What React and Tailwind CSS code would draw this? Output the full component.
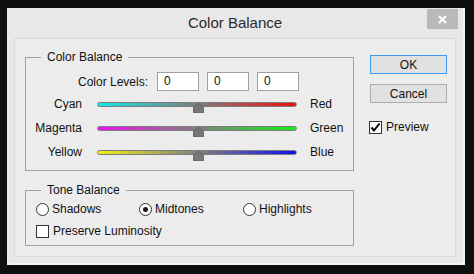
const font = { fontFamily: '"Liberation Sans", Arial, sans-serif' }

const Slider = ({ left, right, from, to }) => (
  <div className="flex items-center h-[24px]">
    <div className="w-[56px] text-right">{left}</div>
    <div className="relative ml-[15px] w-[200px] h-[5px] rounded-full border border-[#7c7c7c]"
      style={{ background: `linear-gradient(to right, ${from}, ${to})` }}>
      <svg className="absolute left-[95px] top-[0px]" width="11" height="10" viewBox="0 0 11 10">
        <path d="M5.5 0 L10.5 4 L10.5 9.5 L0.5 9.5 L0.5 4 Z" fill="#767676" stroke="#6a6a6a" />
      </svg>
    </div>
    <div className="ml-[13px]">{right}</div>
  </div>
)

const Radio = ({ label, checked, width }) => (
  <div className="flex items-center" style={{ width }}>
    <div className="w-[13px] h-[13px] rounded-full border border-[#333] bg-white flex items-center justify-center">
      {checked && <div className="w-[5px] h-[5px] rounded-full bg-[#1a1a1a]" />}
    </div>
    <span className="ml-[3px]">{label}</span>
  </div>
)

const Check = ({ label, checked }) => (
  <div className="flex items-center">
    <div className="w-[13px] h-[13px] border border-[#333] bg-white flex items-center justify-center">
      {checked && (
        <svg width="11" height="11" viewBox="0 0 11 11">
          <path d="M1.5 5.5 L4 8.5 L9.5 1.5" fill="none" stroke="#000" strokeWidth="2" />
        </svg>
      )}
    </div>
    <span className="ml-[4px]">{label}</span>
  </div>
)

export default function App() {
  return (
    <div className="w-[474px] h-[274px] bg-[#0e100f] pt-[8px] pl-[7px] text-[12px] text-[#111]" style={font}>
      <div className="w-[458px] h-[257px] bg-[#e8e8e8] border-r-2 border-b-2 border-[#f3f3f3] flex flex-col">
        <div className="grid grid-cols-[1fr_auto_1fr] h-[30px]">
          <div />
          <div className="text-[15px] text-[#2a2a2a] self-center">Color Balance</div>
          <div className="justify-self-end mt-[1px] mr-[5px] w-[31px] h-[20px] bg-[#b9b9b9] flex items-center justify-center">
            <svg width="9" height="9" viewBox="0 0 9 9">
              <path d="M1 1 L8 8 M8 1 L1 8" stroke="#fff" strokeWidth="2" />
            </svg>
          </div>
        </div>
        <div className="mx-[7px] h-[219px] border border-[#d9d9d9] bg-[#ececec] flex pt-[11px] pl-[10px]">
          <div className="flex flex-col">
            <fieldset className="w-[329px] border border-[#a0a0a0] px-0 pb-[6px]">
              <legend className="ml-[15px] px-[6px] leading-[14px]">Color Balance</legend>
              <div className="flex items-center mt-[8px]">
                <div className="w-[122px] text-right">Color Levels:</div>
                <div className="flex ml-[9px] gap-[8px]">
                  {[0, 1, 2].map(i => (
                    <div key={i} className="w-[42px] h-[19px] border border-[#a0a0a0] bg-white pl-[6px] leading-[17px]">0</div>
                  ))}
                </div>
              </div>
              <div className="mt-[1px]">
                <Slider left="Cyan" right="Red" from="#10e8e8" to="#f01010" />
                <Slider left="Magenta" right="Green" from="#f010f0" to="#10f010" />
                <Slider left="Yellow" right="Blue" from="#f0f010" to="#1010f0" />
              </div>
            </fieldset>
            <fieldset className="w-[329px] mt-[12px] border border-[#a0a0a0] pl-[10px] pb-[5px]">
              <legend className="ml-[5px] px-[6px] leading-[14px]">Tone Balance</legend>
              <div className="flex items-center h-[18px] mt-[3px]">
                <Radio label="Shadows" width="103px" />
                <Radio label="Midtones" checked width="104px" />
                <Radio label="Highlights" width="100px" />
              </div>
              <div className="flex items-center h-[18px] mt-[4px]">
                <Check label="Preserve Luminosity" />
              </div>
            </fieldset>
          </div>
          <div className="ml-[16px] mt-[5px] flex flex-col">
            <div className="w-[77px] h-[19px] border border-[#3c9cf0] bg-[#e1e1e1] flex items-center justify-center">OK</div>
            <div className="w-[77px] h-[19px] mt-[10px] border border-[#adadad] bg-[#e1e1e1] flex items-center justify-center">Cancel</div>
            <div className="mt-[15px] -ml-[1px]">
              <Check label="Preview" checked />
            </div>
          </div>
        </div>
      </div>
    </div>
  )
}
